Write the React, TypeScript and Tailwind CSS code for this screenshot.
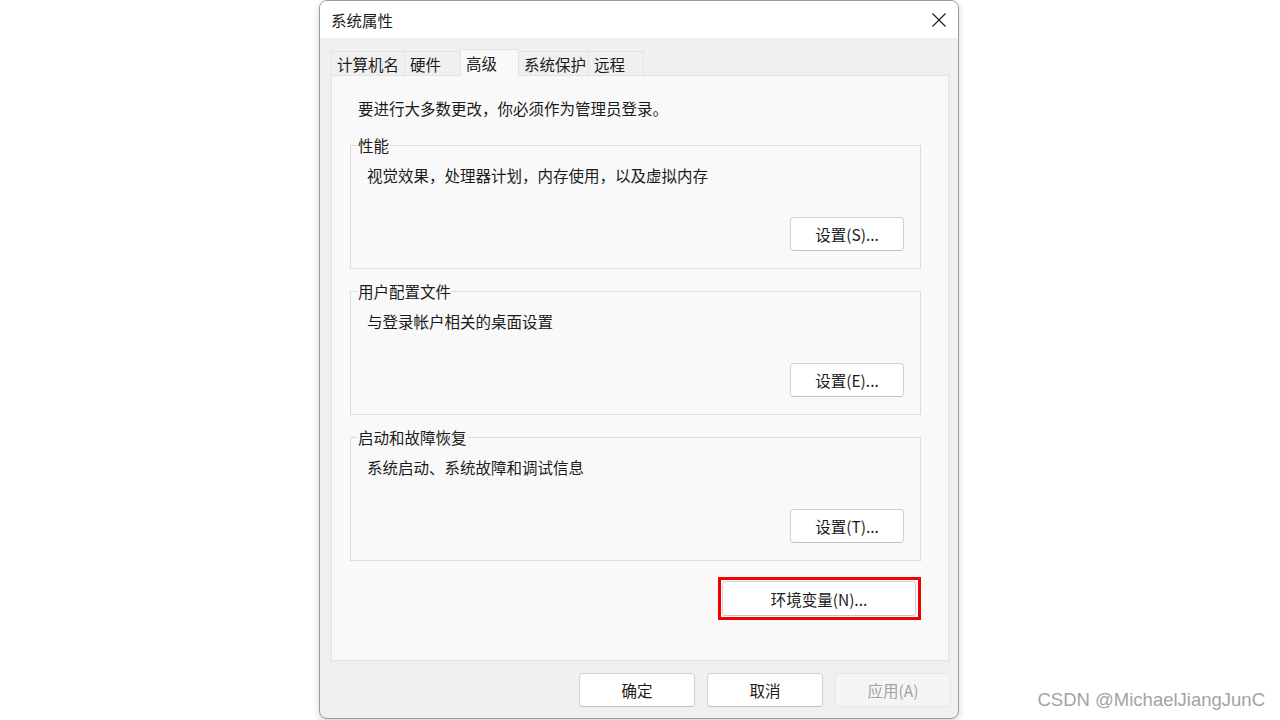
import type { ReactNode } from 'react'

const tabs = [
    { label: '计算机名', w: 'w-[74px]' },
    { label: '硬件', w: 'w-[57px]' },
    { label: '高级', w: 'w-[59px]', active: true },
    { label: '系统保护', w: 'w-[71px]' },
    { label: '远程', w: 'w-[56px]' },
]

function WinButton({ children, className = '', disabled = false }: { children: ReactNode; className?: string; disabled?: boolean }) {
    return (
        <button
            disabled={disabled}
            className={
                'flex items-center justify-center rounded-[4px] border text-[15.5px] leading-[20px] ' +
                (disabled
                    ? 'bg-[#f5f5f5] border-[#e8e8e8] text-[#a2a2a2]'
                    : 'bg-white border-[#d3d3d3] border-b-[#c2c2c2] text-[#1b1b1b]') +
                ' ' +
                className
            }
        >
            {children}
        </button>
    )
}

function GroupBox({ title, text, button }: { title: string; text: string; button: string }) {
    return (
        <fieldset className="border border-[#dcdcdc] w-[571px]">
            <legend className="ml-[6px] px-[1px] text-[15.5px] leading-[20px] text-[#1b1b1b]">{title}</legend>
            <div className="flex flex-col pt-[10px] pb-[17px]">
                <p className="pl-[16px] text-[15.5px] leading-[20px] text-[#1b1b1b]">{text}</p>
                <div className="flex justify-end pr-[16px] mt-[32px]">
                    <WinButton className="w-[114px] h-[34px]">{button}</WinButton>
                </div>
            </div>
        </fieldset>
    )
}

export default function App() {
    return (
        <div className="relative w-[1280px] h-[720px] bg-white overflow-hidden font-['Noto_Sans_CJK_SC',sans-serif]">
            <div className="ml-[319px] w-[640px] h-[719px] flex flex-col rounded-[8px] border border-[#9c9c9c] bg-[#f0f0f0] overflow-hidden shadow-[0_2px_6px_rgba(0,0,0,0.18)]">
                {/* title bar */}
                <div className="h-[37px] shrink-0 bg-white flex items-center justify-between pl-[11px] pr-[12px]">
                    <span className="text-[15.5px] leading-[20px] text-[#1b1b1b]">系统属性</span>
                    <svg width="14" height="14" viewBox="0 0 14 14" className="mt-[1px]">
                        <path d="M0.5 0.5 L13.5 13.5 M13.5 0.5 L0.5 13.5" stroke="#1b1b1b" strokeWidth="1.1" fill="none" />
                    </svg>
                </div>

                <div className="flex flex-col pl-[11px] pt-[11px]">
                    {/* tabs */}
                    <div className="flex items-end h-[26px]">
                        {tabs.map(t =>
                            t.active ? (
                                <div
                                    key={t.label}
                                    className={`${t.w} h-[27px] -mb-px -ml-px relative z-10 flex items-center pl-[5px] bg-[#f9f9f9] border border-b-0 border-[#e3e3e3] text-[15.5px] leading-[20px] text-[#1b1b1b]`}
                                >
                                    {t.label}
                                </div>
                            ) : (
                                <div
                                    key={t.label}
                                    className={`${t.w} h-[24px] -ml-px first:ml-0 flex items-center pl-[5px] bg-[#f0f0f0] border border-b-0 border-[#e3e3e3] text-[15.5px] leading-[20px] text-[#1b1b1b]`}
                                >
                                    {t.label}
                                </div>
                            )
                        )}
                    </div>

                    {/* panel */}
                    <div className="w-[618px] h-[586px] bg-[#f9f9f9] border border-[#e3e3e3] pt-[22px] flex flex-col">
                        <p className="ml-[26px] text-[15.5px] leading-[20px] text-[#1b1b1b]">
                            要进行大多数更改，你必须作为管理员登录。
                        </p>
                        <div className="ml-[18px] mt-[17px] flex flex-col gap-[12px]">
                            <GroupBox title="性能" text="视觉效果，处理器计划，内存使用，以及虚拟内存" button="设置(S)..." />
                            <GroupBox title="用户配置文件" text="与登录帐户相关的桌面设置" button="设置(E)..." />
                            <GroupBox title="启动和故障恢复" text="系统启动、系统故障和调试信息" button="设置(T)..." />
                        </div>
                        <div className="w-[589px] flex justify-end mt-[16px]">
                            <div className="border-[3px] border-[#f00000] p-[1px] pr-[2px]">
                                <WinButton className="w-[194px] h-[35px] border-[#9cbde0]">环境变量(N)...</WinButton>
                            </div>
                        </div>
                    </div>

                    {/* footer buttons */}
                    <div className="w-[620px] flex justify-end gap-[12px] mt-[12px]">
                        <WinButton className="w-[116px] h-[34px]">确定</WinButton>
                        <WinButton className="w-[116px] h-[34px]">取消</WinButton>
                        <WinButton disabled className="w-[116px] h-[34px]">应用(A)</WinButton>
                    </div>
                </div>
            </div>

            <div className="absolute right-[15px] bottom-[8px] font-['Liberation_Sans',sans-serif] text-[18.5px] leading-[24px] text-[#a3a3a3]">
                CSDN @MichaelJiangJunC
            </div>
        </div>
    )
}
